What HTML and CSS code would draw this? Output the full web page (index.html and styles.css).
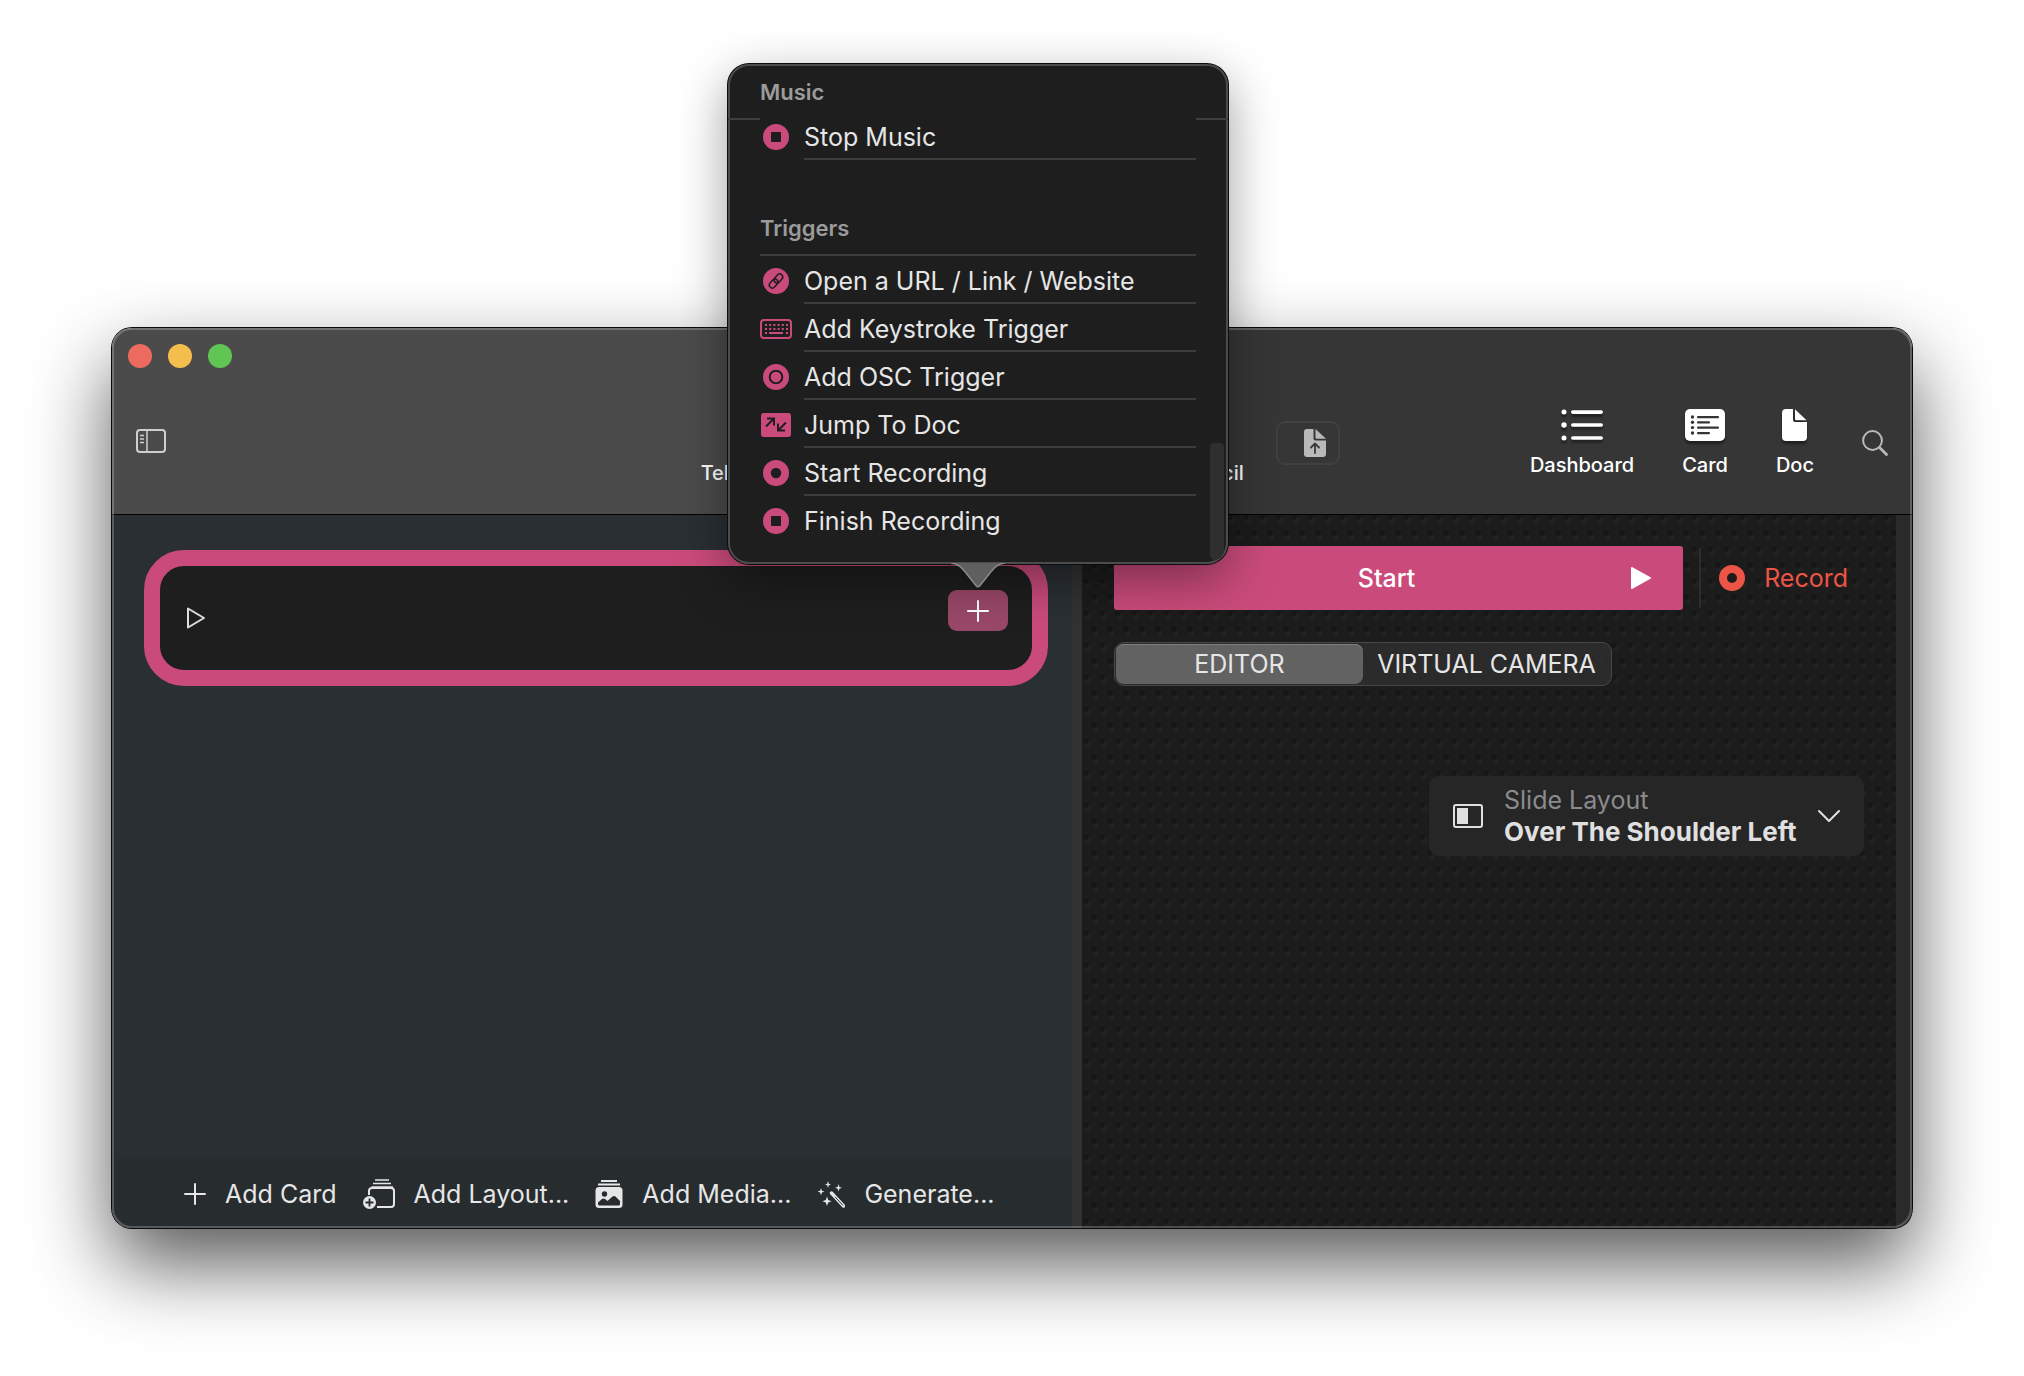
FILE: index.html
```
<!DOCTYPE html>
<html lang="en">
<head>
<meta charset="utf-8">
<title>Teleprompter</title>
<link rel="stylesheet" href="styles.css">
</head>
<body>
<main class="window">
  <header class="titlebar">
    <div class="lights">
      <button class="light light-close" type="button" aria-label="Close"></button>
      <button class="light light-minimize" type="button" aria-label="Minimize"></button>
      <button class="light light-zoom" type="button" aria-label="Zoom"></button>
    </div>
    <div class="toolbar">
      <div class="toolbar-start">
        <button class="icon-button" type="button" aria-label="Toggle sidebar">
          <svg width="30" height="24" viewBox="0 0 30 24" fill="none" stroke="#cfcfcf" stroke-width="2"><rect x="1" y="1" width="28" height="22" rx="3"/><path d="M11 1v22M4 6.500h4M4 10h4M4 13.500h4" stroke-width="1.500"/></svg>
        </button>
      </div>
      <div class="toolbar-labels"><span>Tel</span><span>cil</span></div>
      <button class="export" type="button" aria-label="Export document">
        <svg width="22" height="28" viewBox="0 0 22 28"><path d="M3 0h6.500v9.500a2 2 0 0 0 2 2H22V25a3 3 0 0 1-3 3H3a3 3 0 0 1-3-3V3a3 3 0 0 1 3-3z" fill="#b9b9b9"/><path d="M11.500 0L22 9.700H12.500a1 1 0 0 1-1-1z" fill="#b9b9b9"/><path d="M11 24v-9M7 18.500l4-4 4 4" fill="none" stroke="#3a3a3a" stroke-width="1.800" stroke-linecap="round" stroke-linejoin="round"/></svg>
      </button>
      <nav class="actions">
        <button class="action" type="button">
          <svg class="action-icon" width="42" height="32" viewBox="0 0 42 32" fill="#fff"><circle cx="3" cy="3" r="2.500"/><circle cx="3" cy="16" r="2.700"/><circle cx="3" cy="29" r="2.500"/><rect x="10" y="1.300" width="32" height="3.600" rx="1.800"/><rect x="10" y="14.200" width="32" height="3.600" rx="1.800"/><rect x="10" y="27.200" width="32" height="3.600" rx="1.800"/></svg>
          Dashboard
        </button>
        <button class="action" type="button">
          <svg class="action-icon" width="40" height="32" viewBox="0 0 40 32"><rect width="40" height="32" rx="5" fill="#fff"/><g fill="#363636"><circle cx="7.500" cy="8" r="1.700"/><circle cx="7.500" cy="13.300" r="1.700"/><circle cx="7.500" cy="18.600" r="1.700"/><circle cx="7.500" cy="24" r="1.700"/><rect x="12" y="7" width="22" height="2.200" rx="1"/><rect x="12" y="12.300" width="13" height="2.200" rx="1"/><rect x="12" y="17.600" width="22" height="2.200" rx="1"/><rect x="12" y="23" width="13" height="2.200" rx="1"/></g></svg>
          Card
        </button>
        <button class="action" type="button">
          <svg class="action-icon" width="25" height="32" viewBox="0 0 25 32" fill="#fff"><path d="M4 0h7v11a2 2 0 0 0 2 2h12v15a4 4 0 0 1-4 4H4a4 4 0 0 1-4-4V4a4 4 0 0 1 4-4z"/><path d="M13 0.300L24.500 11.200H14.200a1.200 1.200 0 0 1-1.200-1.200z"/></svg>
          Doc
        </button>
        <button class="icon-button" type="button" aria-label="Search">
          <svg width="26" height="26" viewBox="0 0 26 26" fill="none" stroke="#b9b9b9" stroke-width="2"><circle cx="10.500" cy="10.500" r="9.400"/><path d="M17.500 17.500l7 7" stroke-width="2.800" stroke-linecap="round"/></svg>
        </button>
      </nav>
    </div>
  </header>

  <div class="content">
    <section class="cards-pane">
      <article class="card">
        <button class="icon-button" type="button" aria-label="Play card">
          <svg width="20" height="24" viewBox="0 0 20 24" fill="none" stroke="#dedede" stroke-width="2" stroke-linejoin="round"><path d="M2 2.500v19L18 12z"/></svg>
        </button>
        <div class="add-action">
          <button class="add-button" type="button" aria-label="Add action" aria-expanded="true">
            <svg width="22" height="22" viewBox="0 0 22 22" stroke="#fff" stroke-width="2" stroke-linecap="round"><path d="M11 1v20M1 11h20"/></svg>
          </button>
          <div class="popover">
            <h2 class="popover-title">Music</h2>
            <ul class="menu menu-scrolled">
              <li><button class="menu-item" type="button">
                <svg class="menu-icon" viewBox="0 0 32 26"><circle cx="16" cy="13" r="13"/><rect class="cut" x="11" y="8" width="10" height="10" rx="1"/></svg>
                <span class="menu-text">Stop Music</span></button></li>
            </ul>
            <h2 class="menu-heading">Triggers</h2>
            <ul class="menu">
              <li><button class="menu-item" type="button">
                <svg class="menu-icon" viewBox="0 0 32 26"><circle cx="16" cy="13" r="13"/><g class="cut-line cut-thin" transform="rotate(-48 16 13)"><rect x="7.500" y="10" width="10" height="6" rx="3"/><rect x="14.500" y="10" width="10" height="6" rx="3"/></g></svg>
                <span class="menu-text">Open a URL / Link / Website</span></button></li>
              <li><button class="menu-item" type="button">
                <svg class="menu-icon" viewBox="0 0 32 26"><rect class="outline" x="1" y="4" width="30" height="18" rx="3"/><path class="keys" d="M5 9h23M5 13h23" stroke-dasharray="2 2.200"/><path class="keys" d="M5 17h2M9 17h14M26 17h2"/></svg>
                <span class="menu-text">Add Keystroke Trigger</span></button></li>
              <li><button class="menu-item" type="button">
                <svg class="menu-icon" viewBox="0 0 32 26"><circle cx="16" cy="13" r="13"/><circle class="cut-line" cx="16" cy="13" r="6.300"/></svg>
                <span class="menu-text">Add OSC Trigger</span></button></li>
              <li><button class="menu-item" type="button">
                <svg class="menu-icon" viewBox="0 0 32 26"><rect x="1" y="1" width="30" height="24" rx="3"/><path class="cut-line" d="M6 14.500L14 6.500M7 6.500h7v7M26 10.500l-8 8M18 11.500v7h7"/></svg>
                <span class="menu-text">Jump To Doc</span></button></li>
              <li><button class="menu-item" type="button">
                <svg class="menu-icon" viewBox="0 0 32 26"><circle cx="16" cy="13" r="13"/><circle class="cut" cx="16" cy="13" r="5.200"/></svg>
                <span class="menu-text">Start Recording</span></button></li>
              <li><button class="menu-item" type="button">
                <svg class="menu-icon" viewBox="0 0 32 26"><circle cx="16" cy="13" r="13"/><rect class="cut" x="11" y="8" width="10" height="10" rx="1"/></svg>
                <span class="menu-text menu-text-last">Finish Recording</span></button></li>
            </ul>
            <div class="scroll-thumb"></div>
            <svg class="popover-arrow" width="58" height="26" viewBox="0 0 58 26"><path d="M2 0C10 1 13 5 17 10L27 22.500Q29 25 31 22.500L41 10C45 5 48 1 56 0z" fill="#5f5f5f"/><path d="M2 0C10 1 13 5 17 10L27 22.500Q29 25 31 22.500L41 10C45 5 48 1 56 0" fill="none" stroke="#8b8b8b" stroke-width="1.500"/></svg>
          </div>
        </div>
      </article>
      <footer class="bottom-bar">
        <button class="bar-button" type="button">
          <svg width="22" height="22" viewBox="0 0 22 22" stroke="#e6e6e6" stroke-width="2" stroke-linecap="round"><path d="M11 1v20M1 11h20"/></svg>
          Add Card
        </button>
        <button class="bar-button" type="button">
          <svg width="32" height="32" viewBox="0 0 32 32" fill="none" stroke="#e6e6e6" stroke-width="2"><path d="M12 2h14M10 5.500h18M8.500 9H30" stroke-width="1.500"/><path d="M6 17v-4a3 3 0 0 1 3-3h19a3 3 0 0 1 3 3v13a3 3 0 0 1-3 3H14"/><circle cx="6.500" cy="24.500" r="6.500" fill="#e6e6e6" stroke="none"/><path d="M6.500 20.500v8M2.500 24.500h8" stroke="#272c2f" stroke-width="1.800"/></svg>
          Add Layout...
        </button>
        <button class="bar-button" type="button">
          <svg width="28" height="30" viewBox="0 0 28 30"><path d="M6 2h16M3 5.500h22" stroke="#e6e6e6" stroke-width="1.800"/><rect x="0.500" y="8" width="27" height="21" rx="3.500" fill="#e6e6e6"/><circle cx="9.500" cy="15" r="2.700" fill="#272c2f"/><path d="M3 23.500l4-3.500q1.500-1 3 0l2.500 2 5-4.500q1.500-1.200 3 0l4.500 4.500V25a1.500 1.500 0 0 1-1.500 1.500H4.500A1.500 1.500 0 0 1 3 25z" fill="#272c2f"/></svg>
          Add Media...
        </button>
        <button class="bar-button" type="button">
          <svg width="28" height="28" viewBox="0 0 28 28" fill="#e6e6e6"><path d="M11 1l.8 2.700L14 4.500l-2.200.8L11 8l-.8-2.700L8 4.500l2.200-.8zM21.500 4l.9 2.900 2.600.9-2.600.9-.9 2.900-.9-2.900-2.600-.9 2.600-.9zM4 8l.9 2.700 2.600.9-2.600.9L4 15.300l-.9-2.800-2.600-.9 2.600-.9zM10 16.500l1.200 3.600 3.400 1.100-3.400 1.200L10 26l-1.200-3.600-3.400-1.200 3.400-1.100z"/><path d="M14.500 13L26.500 26" stroke="#e6e6e6" stroke-width="3.400" stroke-linecap="round"/><path d="M18 16.800L26 25.500" stroke="#272c2f" stroke-width="1"/></svg>
          Generate...
        </button>
      </footer>
    </section>
    <div class="divider"></div>
    <section class="editor-pane">
      <div class="run-row">
        <button class="start" type="button">
          <span class="start-label">Start</span>
          <svg width="20" height="22" viewBox="0 0 20 22" fill="#fff" stroke="#fff" stroke-width="2" stroke-linejoin="round"><path d="M1 1v20l18-10z"/></svg>
        </button>
        <button class="record" type="button">
          <svg width="26" height="26" viewBox="0 0 26 26" fill="none" stroke="#ec5545" stroke-width="8"><circle cx="13" cy="13" r="9"/></svg>
          Record
        </button>
      </div>
      <div class="segments" role="radiogroup" aria-label="Mode">
        <label class="segment"><input type="radio" name="mode" checked>EDITOR</label>
        <label class="segment"><input type="radio" name="mode">VIRTUAL CAMERA</label>
      </div>
      <div class="slide-layout">
        <svg width="30" height="24" viewBox="0 0 30 24"><rect x="1" y="1" width="28" height="22" rx="2" fill="none" stroke="#e0e0e0" stroke-width="2"/><rect x="4" y="4" width="11" height="16" fill="#e0e0e0"/></svg>
        <div class="slide-layout-field">
          <label class="slide-layout-label" for="layout">Slide Layout</label>
          <select class="slide-layout-select" id="layout"><option>Over The Shoulder Left</option></select>
        </div>
        <svg width="22" height="14" viewBox="0 0 22 14" fill="none" stroke="#e0e0e0" stroke-width="2" stroke-linecap="round" stroke-linejoin="round"><path d="M1 2l10 10L21 2"/></svg>
      </div>
    </section>
    <div class="gutter"></div>
  </div>
</main>
</body>
</html>
```
FILE: styles.css
```
* {
  box-sizing: border-box;
}

:root {
  --pink: #ca4b7b;
  --dark: #1e1e1e;
}

body {
  display: flex;
  min-height: 100vh;
  margin: 0;
  padding: 328px 112px 148px;
  background: #fff;
  color: #e6e6e6;
  font-family: Inter, "Liberation Sans", sans-serif;
  font-size: 25px;
  line-height: 32px;
}

button {
  margin: 0;
  padding: 0;
  border: 0;
  background: none;
  color: inherit;
  font: inherit;
}

svg {
  display: block;
  flex: none;
}

/* Window frame */
.window {
  position: relative;
  display: flex;
  flex: 1;
  flex-direction: column;
  min-width: 0;
  border-radius: 20px;
  box-shadow: 0 0 0 1px #0a0a0a, 0 36px 80px rgba(0, 0, 0, 0.66);
}

.window::after {
  position: absolute;
  inset: 0;
  border: 2px solid rgba(255, 255, 255, 0.22);
  border-radius: 20px;
  content: "";
  pointer-events: none;
}

/* Title bar */
.titlebar {
  display: flex;
  flex-direction: column;
  height: 187px;
  border-bottom: 1px solid #000;
  border-radius: 20px 20px 0 0;
  background: linear-gradient(to right, #4b4b4b 50%, #363636 55%);
}

.lights {
  display: flex;
  gap: 16px;
  padding: 16px 16px 0;
}

.light {
  width: 24px;
  height: 24px;
  border-radius: 50%;
}

.light-close {
  background: #ed6a5e;
}

.light-minimize {
  background: #f4be4f;
}

.light-zoom {
  background: #61c554;
}

.toolbar {
  display: flex;
  flex: 1;
  gap: 4px;
  align-items: center;
  padding: 4px 24px 0;
  color: #fff;
  font-size: 20px;
  font-weight: 500;
  line-height: 24px;
}

.toolbar-start {
  width: 32%;
}

.toolbar-labels {
  display: flex;
  align-self: flex-end;
  justify-content: space-between;
  width: 31%;
  padding-bottom: 29px;
}

.export {
  display: flex;
  align-items: center;
  justify-content: flex-end;
  width: 64px;
  height: 44px;
  margin-left: 28px;
  padding-right: 12px;
  border: 2px solid #414141;
  border-radius: 9px;
}

.actions {
  display: flex;
  align-items: center;
  gap: 48px;
  margin-left: auto;
}

.action {
  display: flex;
  flex-direction: column;
  align-items: center;
  gap: 12px;
}

.action-icon {
  overflow: visible;
  filter: drop-shadow(0 3px 1px rgba(0, 0, 0, 0.4));
}

/* Panes */
.content {
  display: grid;
  flex: 1;
  grid-template-columns: minmax(0, 960fr) 10px minmax(0, 814fr) 16px;
}

.cards-pane {
  display: flex;
  flex-direction: column;
  justify-content: space-between;
  border-radius: 0 0 0 20px;
  background: #2a2f33;
}

.divider {
  background: #333232;
}

.gutter {
  border-radius: 0 0 20px 0;
  background: #2a2a2a;
}

/* Card */
.card {
  display: flex;
  align-items: center;
  justify-content: space-between;
  min-height: 136px;
  margin: 35px 24px 0 32px;
  padding: 0 24px 0 26px;
  border: 16px solid var(--pink);
  border-radius: 40px;
  background: var(--dark);
}

.add-action {
  position: relative;
  align-self: flex-start;
  margin-top: 24px;
}

.add-button {
  display: flex;
  align-items: center;
  justify-content: center;
  width: 60px;
  height: 41px;
  border-radius: 9px;
  background: #9a4869;
}

/* Popover */
.popover {
  position: absolute;
  z-index: 1;
  bottom: calc(100% + 26px);
  left: calc(50% - 250px);
  width: 500px;
  padding-bottom: 20px;
  border-radius: 21px;
  background: var(--dark);
  box-shadow: inset 0 0 0 2px #4c4c4c, 0 0 0 1px #0c0c0c, 0 16px 50px rgba(0, 0, 0, 0.4);
}

.popover-title,
.menu-heading {
  margin: 0;
  color: #9b9b9b;
  font-size: 22px;
  font-weight: 600;
  line-height: 24px;
}

.popover-title {
  padding: 16px 32px;
  background: linear-gradient(to right, #3e3e3e 32px, transparent 32px calc(100% - 32px), #3e3e3e calc(100% - 32px)) bottom / 100% 2px no-repeat;
}

.menu-heading {
  margin: 0 32px;
  padding: 56px 0 14px;
  border-bottom: 2px solid #3c3c3c;
}

.menu {
  margin: 0;
  padding: 0 32px;
  list-style: none;
}

.menu-scrolled {
  margin-top: -8px;
}

.menu-item {
  display: flex;
  align-items: center;
  gap: 12px;
  width: 100%;
  text-align: left;
}

.menu-icon {
  width: 32px;
  height: 26px;
  margin-top: 2px;
  fill: var(--pink);
}

.menu-icon .cut {
  fill: var(--dark);
}

.menu-icon .cut-line {
  fill: none;
  stroke: var(--dark);
  stroke-width: 2;
}

.menu-icon .cut-thin {
  stroke-width: 1.500;
}

.menu-icon .outline {
  fill: none;
  stroke: var(--pink);
  stroke-width: 2;
}

.menu-icon .keys {
  fill: none;
  stroke: var(--pink);
  stroke-width: 2;
}

.menu-text {
  flex: 1;
  padding: 9px 0 5px;
  border-bottom: 2px solid #3c3c3c;
}

.menu-text-last {
  border-color: transparent;
}

.scroll-thumb {
  position: absolute;
  right: 4px;
  bottom: 4px;
  width: 14px;
  height: 117px;
  border-radius: 7px 7px 14px 7px;
  background: #2f2f2f;
}

.popover-arrow {
  position: absolute;
  top: calc(100% - 1px);
  left: calc(50% - 29px);
}

/* Bottom bar */
.bottom-bar {
  display: flex;
  align-items: center;
  gap: 26px;
  height: 69px;
  padding: 0 72px;
  border-radius: 0 0 0 20px;
  background: #272c2f;
}

.bar-button {
  display: flex;
  align-items: center;
  gap: 19px;
  white-space: nowrap;
}

/* Editor pane, with an embossed dot texture */
.editor-pane {
  display: flex;
  flex-direction: column;
  align-items: flex-start;
  padding: 31px 32px;
  background:
    radial-gradient(circle at 4px 2px, #161616 2px, transparent 4px) 0 0 / 16px 32px,
    radial-gradient(circle at 12px 18px, #161616 2px, transparent 4px) 0 0 / 16px 32px,
    radial-gradient(circle at 6px 5px, #232323 2px, transparent 4px) 0 0 / 16px 32px,
    radial-gradient(circle at 14px 21px, #232323 2px, transparent 4px) 0 0 / 16px 32px,
    #1c1c1c;
}

.run-row {
  display: flex;
  align-self: stretch;
  gap: 16px;
  height: 64px;
  padding-right: 16px;
}

.start {
  display: flex;
  flex: 1;
  align-items: center;
  padding: 0 32px 0 28px;
  border-radius: 3px;
  background: var(--pink);
  color: #fff;
  font-weight: 500;
}

.start-label {
  flex: 1;
}

.record {
  display: flex;
  align-items: center;
  gap: 19px;
  margin: 2px 0;
  padding-left: 18px;
  border-left: 2px solid #2d2d2d;
  color: #ec5545;
}

.segments {
  display: grid;
  grid-template-columns: 1fr 1fr;
  width: 498px;
  height: 44px;
  margin-top: 32px;
  padding: 1px;
  border: 1px solid #484848;
  border-radius: 10px;
  background: rgba(48, 48, 48, 0.75);
}

.segment {
  display: flex;
  align-items: center;
  justify-content: center;
  border-radius: 8px;
  white-space: nowrap;
}

.segment input {
  position: absolute;
  opacity: 0;
}

.segment:has(input:checked) {
  background: #626262;
  box-shadow: inset 0 1px 0 #7d7d7d;
}

.slide-layout {
  display: flex;
  align-items: center;
  align-self: flex-end;
  gap: 21px;
  height: 80px;
  margin-top: 90px;
  padding: 0 24px;
  border-radius: 10px;
  background: #262626;
}

.slide-layout-field {
  display: flex;
  flex-direction: column;
}

.slide-layout-label {
  color: #8b8b8f;
}

.slide-layout-select {
  appearance: none;
  padding: 0;
  border: 0;
  background: none;
  color: #e0e0e0;
  font: inherit;
  font-size: 26px;
  font-weight: 700;
}
```
